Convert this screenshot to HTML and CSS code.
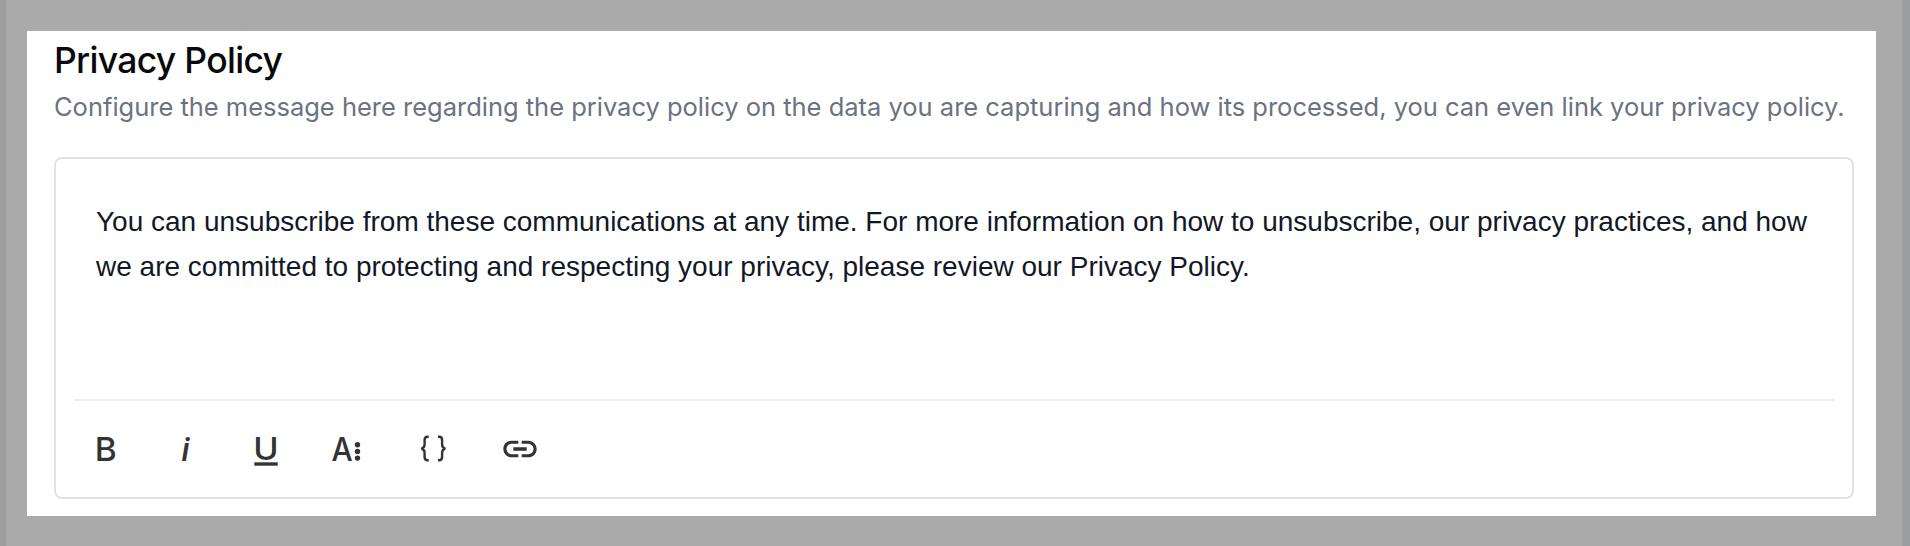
FILE: index.html
```
<!DOCTYPE html>
<html lang="en">

<head>
    <meta charset="UTF-8">
    <meta name="viewport" content="width=device-width, initial-scale=1">
    <title>Privacy Policy</title>
    <link rel="stylesheet" href="styles.css">
</head>
<body>
    <div class="modal">
        <section class="panel">
            <h1>Privacy Policy</h1>
            <p class="hint">Configure the message here regarding the privacy policy on the data you are capturing and how its processed, you can even link your privacy policy.</p>

            <div class="editor">
                <div class="content" contenteditable="true" spellcheck="false">You can unsubscribe from these communications at any time. For more information on how to unsubscribe, our privacy practices, and how we are committed to protecting and respecting your privacy, please review our Privacy Policy.</div>
                <div class="toolbar">
                    <button aria-label="Bold">
                        <svg viewBox="0 0 40 40"><text x="8.8" y="32" textLength="22" lengthAdjust="spacingAndGlyphs">B</text></svg>
                    </button>
                    <button aria-label="Italic">
                        <svg viewBox="0 0 40 40"><text class="italic" x="15.5" y="32">i</text></svg>
                    </button>
                    <button aria-label="Underline">
                        <svg viewBox="0 0 40 40">
                            <text class="under" x="7.3" y="31.3" textLength="25.4" lengthAdjust="spacingAndGlyphs">U</text>
                            <rect x="8.3" y="33.3" width="23.4" height="3.4"/>
                        </svg>
                    </button>
                    <button class="style" aria-label="Text style">
                        <svg viewBox="0 0 40 40">
                            <text x="4.4" y="32" textLength="21.2" lengthAdjust="spacingAndGlyphs">A</text>
                            <circle cx="30.5" cy="15.7" r="2.7"/>
                            <circle cx="30.5" cy="22.4" r="2.7"/>
                            <circle cx="30.5" cy="29.1" r="2.7"/>
                        </svg>
                    </button>
                    <button class="vars" aria-label="Variables">
                        <svg viewBox="0 0 40 40">
                            <path class="line" d="M15.7 7.7h-1.2q-2.9 0-2.9 3.2v4.6q0 3.4-3.3 4.1q3.3.7 3.3 4.1v4.4q0 3.2 2.9 3.2h1.2M25 7.7h1.2q2.9 0 2.9 3.2v4.6q0 3.4 3.3 4.1q-3.3.7-3.3 4.1v4.4q0 3.2-2.9 3.2H25"/>
                        </svg>
                    </button>
                    <button class="link" aria-label="Link">
                        <svg viewBox="0 0 24 24">
                            <path d="M3.9 12c0-1.71 1.39-3.1 3.1-3.1h4V7H7c-2.76 0-5 2.24-5 5s2.24 5 5 5h4v-1.9H7c-1.71 0-3.1-1.39-3.1-3.1zM8 13h8v-2H8v2zm9-6h-4v1.9h4c1.71 0 3.1 1.39 3.1 3.1s-1.39 3.1-3.1 3.1h-4V17h4c2.76 0 5-2.24 5-5s-2.24-5-5-5z"/>
                        </svg>
                    </button>
                </div>
            </div>
        </section>
    </div>
</body>

</html>
```

FILE: styles.css
```
*{
    box-sizing:border-box;
}
body{
    margin:0;
    padding:0 8px 0 6px;
    height:546px;
    background:#9d9ea0;
    overflow:hidden;
}
.modal{
    height:546px;
    padding:31px 26px 30px 21px;
    background:#aaa;
}
.panel{
    height:485px;
    padding:0 22px 0 27px;
    background:#fff;
    font-family:Inter, sans-serif;
}
h1{
    margin:0;
    padding-top:8px;
    color:#09090b;
    font-size:35.5px;
    line-height:44px;
    font-weight:500;
    letter-spacing:-0.7px;
}
.hint{
    margin:5px 0 31px;
    color:#6b7280;
    font-size:25.5px;
    line-height:38px;
    letter-spacing:-0.01px;
    white-space:nowrap;
}
.editor{
    display:flex;
    flex-direction:column;
    height:342px;
    padding:0 18px;
    border:solid 2px #e1e1e7;
    border-radius:8px;
}
.content{
    flex:1;
    padding:40px 21px 0 22px;
    color:#111827;
    font-family:"Liberation Sans", Arial, sans-serif;
    font-size:28px;
    line-height:45px;
    outline:none;
}
.toolbar{
    display:flex;
    height:98px;
    padding:28px 0 0 12px;
    border-top:solid 2px #eee;
}
button{
    width:40px;
    height:40px;
    margin-right:40px;
    padding:0;
    border:none;
    background:none;
}
svg{
    display:block;
    width:40px;
    height:40px;
    fill:#333;
}
svg text{
    font-family:Inter, sans-serif;
    font-size:33px;
    font-weight:500;
}
svg .italic{
    font-family:Roboto, sans-serif;
    font-style:italic;
}
svg .under{
    font-size:31.5px;
}
.style{
    margin-left:1px;
    margin-right:46px;
}
.vars{
    margin-right:47px;
}
.line{
    fill:none;
    stroke:#333;
    stroke-width:2.4;
}
```
